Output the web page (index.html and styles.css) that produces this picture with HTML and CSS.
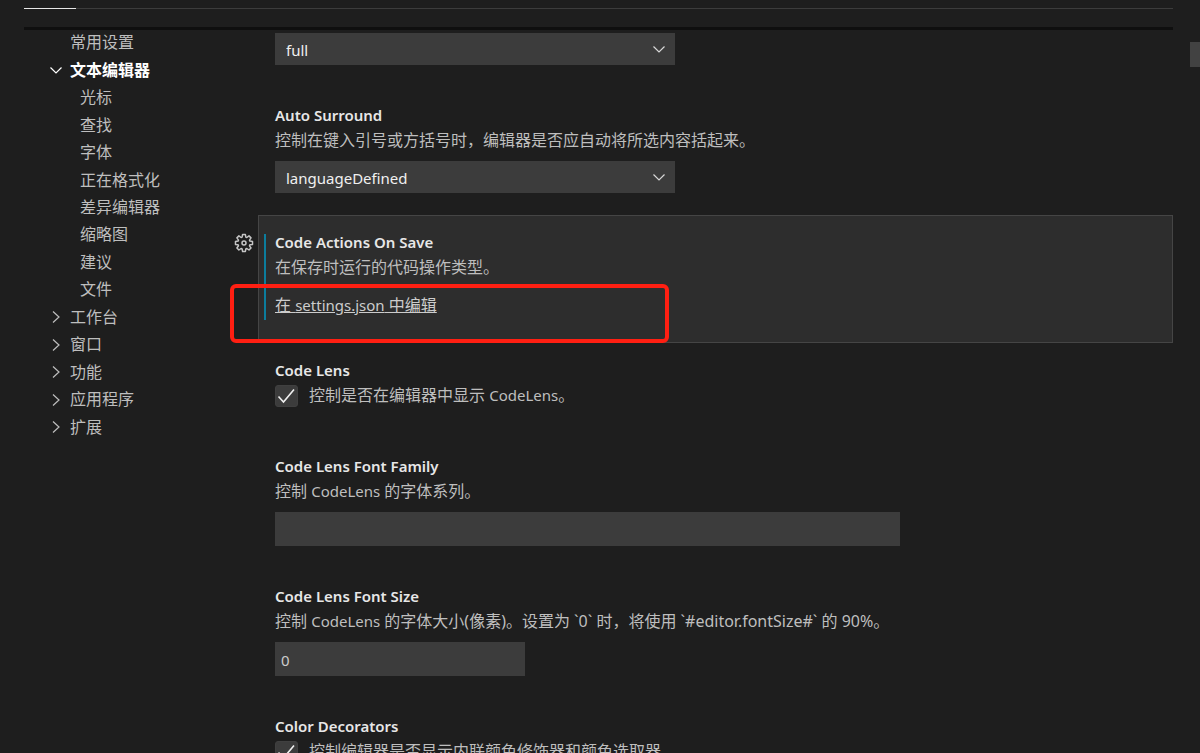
FILE: index.html
```html
<!DOCTYPE html>
<html lang="zh-CN">
<head>
    <meta charset="UTF-8">
    <meta name="viewport" content="width=device-width, initial-scale=1.0">
    <title>设置</title>
    <link rel="stylesheet" href="styles.css">
</head>
<body>
    <!-- shared icons -->
    <svg class="icon-defs" width="0" height="0">
        <symbol id="chevron-down" viewBox="0 0 16 16"><path d="M2.5 5.5L8 11l5.5-5.5" fill="none" stroke="currentColor" stroke-width="1.2"/></symbol>
        <symbol id="chevron-right" viewBox="0 0 16 16"><path d="M5 2.5L11 8l-6 5.5" fill="none" stroke="currentColor" stroke-width="1.2"/></symbol>
        <symbol id="check" viewBox="0 0 22 22"><path d="M3.500 11.500l5 5.500L19 4.500" fill="none" stroke="currentColor" stroke-width="1.6"/></symbol>
    </svg>

    <header class="settings-header">
        <div class="tab-line"><span class="tab-active"></span></div>
    </header>

    <div class="settings-body">
        <nav class="toc">
            <a href="#" class="toc-item">常用设置</a>
            <a href="#" class="toc-item selected"><svg><use href="#chevron-down"/></svg>文本编辑器</a>
            <a href="#" class="toc-item child">光标</a>
            <a href="#" class="toc-item child">查找</a>
            <a href="#" class="toc-item child">字体</a>
            <a href="#" class="toc-item child">正在格式化</a>
            <a href="#" class="toc-item child">差异编辑器</a>
            <a href="#" class="toc-item child">缩略图</a>
            <a href="#" class="toc-item child">建议</a>
            <a href="#" class="toc-item child">文件</a>
            <a href="#" class="toc-item"><svg><use href="#chevron-right"/></svg>工作台</a>
            <a href="#" class="toc-item"><svg><use href="#chevron-right"/></svg>窗口</a>
            <a href="#" class="toc-item"><svg><use href="#chevron-right"/></svg>功能</a>
            <a href="#" class="toc-item"><svg><use href="#chevron-right"/></svg>应用程序</a>
            <a href="#" class="toc-item"><svg><use href="#chevron-right"/></svg>扩展</a>
        </nav>

        <main class="settings-list">
            <section class="setting first">
                <div class="select-box">
                    <select aria-label="Auto Indent"><option>full</option></select>
                    <svg><use href="#chevron-down"/></svg>
                </div>
            </section>

            <section class="setting">
                <h3><label for="autoSurround">Auto Surround</label></h3>
                <p>控制在键入引号或方括号时，编辑器是否应自动将所选内容括起来。</p>
                <div class="select-box">
                    <select id="autoSurround"><option>languageDefined</option></select>
                    <svg><use href="#chevron-down"/></svg>
                </div>
            </section>

            <section class="setting focused">
                <button class="gear" aria-label="更多操作">
                    <svg viewBox="0 0 20 20" fill="none" stroke="currentColor" stroke-width="1.5" stroke-linejoin="round">
                        <path d="M8.6 1.5h2.8l.4 2.6 1 .4 2.2-1.6 2 2-1.5 2.2.4 1 2.6.5v2.8l-2.6.4-.4 1 1.5 2.2-2 2-2.2-1.5-1 .4-.4 2.6H8.6l-.5-2.6-1-.4-2.2 1.5-2-2 1.6-2.2-.4-1-2.6-.4V8.6l2.6-.5.4-1-1.6-2.2 2-2 2.2 1.6 1-.4z"/>
                        <circle cx="10" cy="10" r="2"/>
                    </svg>
                </button>
                <div class="modified-bar"></div>
                <h3>Code Actions On Save</h3>
                <p>在保存时运行的代码操作类型。</p>
                <a href="#" class="edit-link">在 <span class="latin">settings.json</span> 中编辑</a>
                <div class="highlight"></div>
            </section>

            <section class="setting">
                <h3>Code Lens</h3>
                <div class="check-row">
                    <span class="check-box">
                        <input type="checkbox" id="codeLens" checked>
                        <svg><use href="#check"/></svg>
                    </span>
                    <label for="codeLens">控制是否在编辑器中显示 <span class="latin">CodeLens</span>。</label>
                </div>
            </section>

            <section class="setting">
                <h3><label for="fontFamily">Code Lens Font Family</label></h3>
                <p>控制 <span class="latin">CodeLens</span> 的字体系列。</p>
                <input type="text" class="text-box" id="fontFamily">
            </section>

            <section class="setting">
                <h3><label for="fontSize">Code Lens Font Size</label></h3>
                <p>控制 <span class="latin">CodeLens</span> 的字体大小(像素)。设置为 `0` 时，将使用 `#editor.fontSize#` 的 90%。</p>
                <input type="text" class="text-box number" id="fontSize" value="0">
            </section>

            <section class="setting">
                <h3>Color Decorators</h3>
                <div class="check-row">
                    <span class="check-box">
                        <input type="checkbox" id="colorDecorators" checked>
                        <svg><use href="#check"/></svg>
                    </span>
                    <label for="colorDecorators">控制编辑器是否显示内联颜色修饰器和颜色选取器。</label>
                </div>
            </section>
        </main>
    </div>
    <div class="scroll-thumb"></div>
</body>
</html>
```
FILE: styles.css
```css
* {
    box-sizing: border-box;
}
body {
    margin: 0;
    height: 100vh;
    overflow: hidden;
    background-color: #1e1e1e;
    color: #bebebe;
    font-family: "Noto Sans", "Noto Sans CJK SC", sans-serif;
    font-size: 16px;
    line-height: 25px;
}
.icon-defs {
    display: block;
}
.settings-header {
    margin: 0 27px 0 24px;
    padding-top: 8px;
    height: 30px;
    border-bottom: 3px solid #0f0f0f;
}
.tab-line {
    height: 1px;
    background-color: #3c3c3c;
}
.tab-active {
    display: block;
    width: 52px;
    height: 1px;
    background-color: #e7e7e7;
}
.settings-body {
    display: flex;
    margin: 0 27px 0 24px;
}

/* left tree */
.toc {
    display: grid;
    grid-auto-rows: 1fr;
    flex: 0 0 234px;
    height: 412px;
    margin-top: -1px;
    padding-left: 46px;
}
.toc-item {
    display: flex;
    align-items: center;
    color: #bebebe;
    text-decoration: none;
}
.toc-item svg {
    width: 16px;
    height: 16px;
    margin-left: -22px;
    margin-right: 6px;
}
.toc-item.selected {
    color: #fff;
    font-weight: bold;
}
.toc-item.child {
    padding-left: 10px;
}

/* settings */
.settings-list {
    flex: 1;
    padding-top: 3px;
}
.setting {
    position: relative;
    padding: 15px 16px 23px 17px;
}
.setting.first {
    padding-top: 0;
}
.setting.focused {
    margin-top: -1px;
    padding: 14px 15px 24px 16px;
    border: 1px solid #454545;
    background-color: #2d2d2d;
}
h3 {
    margin: 0;
    font-size: 15px;
    font-weight: 600;
    color: #e7e7e7;
}
p {
    margin: 0 0 8px;
}
.latin {
    font-size: 15px;
}
.select-box {
    position: relative;
    max-width: 400px;
}
select {
    display: block;
    appearance: none;
    width: 100%;
    height: 32px;
    padding: 2px 11px 0;
    border: none;
    border-radius: 0;
    background-color: #3c3c3c;
    color: #f0f0f0;
    font-family: inherit;
    font-size: 15px;
}
.select-box svg {
    position: absolute;
    right: 8px;
    top: 8px;
    width: 16px;
    height: 16px;
    color: #d8d8d8;
    pointer-events: none;
}
.text-box {
    display: block;
    width: 100%;
    max-width: 625px;
    height: 34px;
    padding: 2px 6px 0;
    border: none;
    background-color: #3c3c3c;
    color: #cccccc;
    font-family: inherit;
    font-size: 15px;
}
.text-box.number {
    max-width: 250px;
}
.edit-link {
    display: block;
    width: fit-content;
    margin-top: 13px;
    color: #cccccc;
    text-decoration: underline;
}
.gear {
    position: absolute;
    left: -25px;
    top: 17px;
    width: 20px;
    height: 20px;
    padding: 0;
    border: none;
    background: none;
    color: #c5c5c5;
}
.gear svg {
    display: block;
    width: 20px;
    height: 20px;
}
.modified-bar {
    position: absolute;
    left: 5px;
    top: 18px;
    bottom: 22px;
    width: 2px;
    background-color: #0c7d9d;
}
.highlight {
    position: absolute;
    left: -29px;
    top: 68px;
    width: 439px;
    height: 59px;
    border: 4px solid #ff1f12;
    border-radius: 6px;
    pointer-events: none;
}
.check-row {
    display: flex;
    align-items: center;
    gap: 11px;
    margin-bottom: 8px;
}
.check-box {
    position: relative;
    width: 23px;
    height: 22px;
}
.check-box input {
    display: block;
    appearance: none;
    width: 100%;
    height: 100%;
    margin: 0;
    border: 1px solid #404040;
    border-radius: 3px;
    background-color: #3c3c3c;
}
.check-box svg {
    position: absolute;
    left: 0;
    top: 0;
    width: 22px;
    height: 22px;
    color: #f0f0f0;
    pointer-events: none;
}
.check-box input:not(:checked) + svg {
    display: none;
}
.scroll-thumb {
    position: fixed;
    right: 0;
    top: 42px;
    width: 10px;
    height: 25px;
    background-color: #424242;
}
```
